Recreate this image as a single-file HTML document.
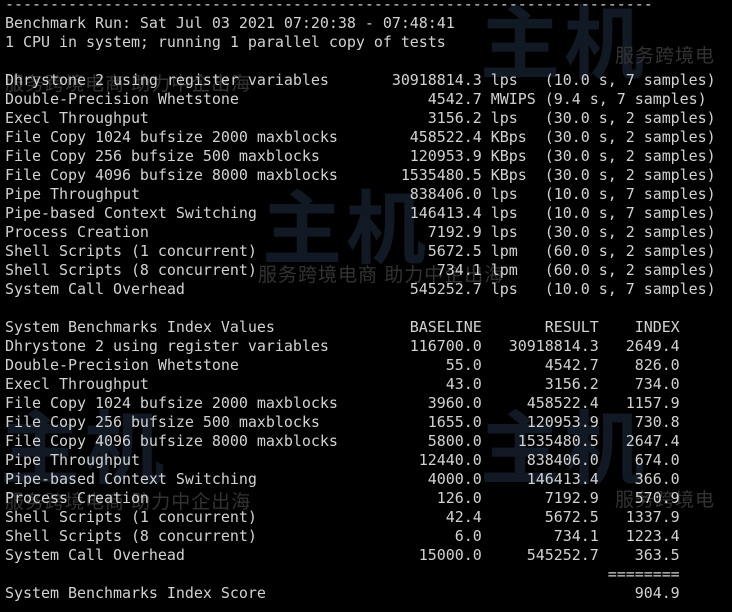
<!DOCTYPE html>
<html><head><meta charset="utf-8"><style>
html,body{margin:0;padding:0;background:#000;width:732px;height:612px;overflow:hidden;position:relative}
pre{position:absolute;left:5px;top:-5px;margin:0;font-family:"DejaVu Sans Mono","Liberation Mono",monospace;font-size:15px;letter-spacing:-0.035px;line-height:19px;color:#d2d2d2;z-index:2}
.wm{position:absolute;font-family:"Liberation Sans","Noto Sans CJK SC",sans-serif;z-index:1;white-space:nowrap}
.big{color:#111924;font-size:80px;font-weight:bold;letter-spacing:4px}
.sm{color:#333;font-size:19px;letter-spacing:1px}
</style></head><body>
<div class="wm big" style="left:262px;top:165px">主机</div>
<div class="wm big" style="left:480px;top:-20px">主机</div>
<div class="wm big" style="left:480px;top:385px">主机</div>
<div class="wm big" style="left:0px;top:385px">主机</div>
<div class="wm sm" style="left:5px;top:69px">服务跨境电商 助力中企出海</div>
<div class="wm sm" style="left:258px;top:260px">服务跨境电商 助力中企出海</div>
<div class="wm sm" style="left:5px;top:487px">服务跨境电商 助力中企出海</div>
<div class="wm sm" style="left:615px;top:41px">服务跨境电</div>
<div class="wm sm" style="left:615px;top:485px">服务跨境电</div>
<pre>------------------------------------------------------------------------
Benchmark Run: Sat Jul 03 2021 07:20:38 - 07:48:41
1 CPU in system; running 1 parallel copy of tests

Dhrystone 2 using register variables       30918814.3 lps   (10.0 s, 7 samples)
Double-Precision Whetstone                     4542.7 MWIPS (9.4 s, 7 samples)
Execl Throughput                               3156.2 lps   (30.0 s, 2 samples)
File Copy 1024 bufsize 2000 maxblocks        458522.4 KBps  (30.0 s, 2 samples)
File Copy 256 bufsize 500 maxblocks          120953.9 KBps  (30.0 s, 2 samples)
File Copy 4096 bufsize 8000 maxblocks       1535480.5 KBps  (30.0 s, 2 samples)
Pipe Throughput                              838406.0 lps   (10.0 s, 7 samples)
Pipe-based Context Switching                 146413.4 lps   (10.0 s, 7 samples)
Process Creation                               7192.9 lps   (30.0 s, 2 samples)
Shell Scripts (1 concurrent)                   5672.5 lpm   (60.0 s, 2 samples)
Shell Scripts (8 concurrent)                    734.1 lpm   (60.0 s, 2 samples)
System Call Overhead                         545252.7 lps   (10.0 s, 7 samples)

System Benchmarks Index Values               BASELINE       RESULT    INDEX
Dhrystone 2 using register variables         116700.0   30918814.3   2649.4
Double-Precision Whetstone                       55.0       4542.7    826.0
Execl Throughput                                 43.0       3156.2    734.0
File Copy 1024 bufsize 2000 maxblocks          3960.0     458522.4   1157.9
File Copy 256 bufsize 500 maxblocks            1655.0     120953.9    730.8
File Copy 4096 bufsize 8000 maxblocks          5800.0    1535480.5   2647.4
Pipe Throughput                               12440.0     838406.0    674.0
Pipe-based Context Switching                   4000.0     146413.4    366.0
Process Creation                                126.0       7192.9    570.9
Shell Scripts (1 concurrent)                     42.4       5672.5   1337.9
Shell Scripts (8 concurrent)                      6.0        734.1   1223.4
System Call Overhead                          15000.0     545252.7    363.5
                                                                   ========
System Benchmarks Index Score                                         904.9
</pre>
</body></html>
